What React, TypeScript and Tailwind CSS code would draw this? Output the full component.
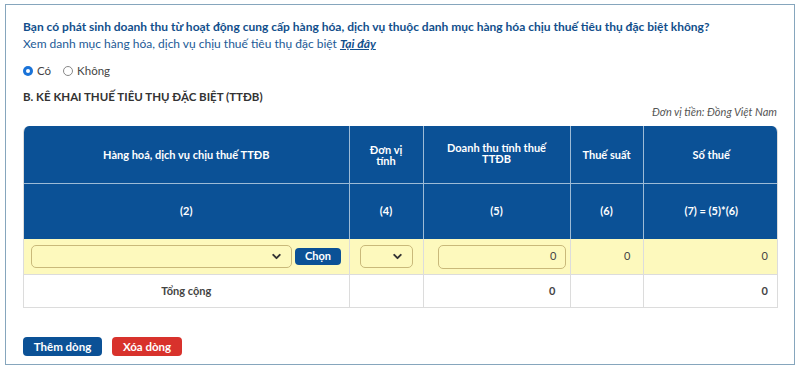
import { ChevronDown } from "lucide-react";

const FONT = { fontFamily: "Lato, 'Noto Sans', sans-serif" };

function Select({ width }: { width: string }) {
  return (
    <div
      className={`${width} h-[23px] rounded-[5px] border border-[#c9b97a] bg-[#fdf9bd] flex items-center justify-end pr-2`}
    >
      <ChevronDown size={13} strokeWidth={3.5} className="text-[#333]" />
    </div>
  );
}

export default function App() {
  return (
    <div className="w-[800px] h-[371px] bg-white pt-[4px] px-[5px]" style={FONT}>
      <div className="h-[361px] border-[1.5px] border-[#86a6bd] px-[17px] pt-[14px]">
        <p className="text-[12px] font-bold text-[#124f8c] leading-[16px] whitespace-nowrap">
          Bạn có phát sinh doanh thu từ hoạt động cung cấp hàng hóa, dịch vụ thuộc danh mục hàng hóa chịu thuế tiêu thụ đặc biệt không?
        </p>
        <p className="text-[12px] text-[#1c5a96] leading-[16px] mt-[1px]">
          Xem danh mục hàng hóa, dịch vụ chịu thuế tiêu thụ đặc biệt{" "}
          <a className="italic font-bold underline text-[#124f8c]">Tại đây</a>
        </p>

        <div className="flex items-center gap-[12px] mt-[10px] text-[11.5px] text-[#444]">
          <label className="flex items-center gap-[4px]">
            <span className="w-[10px] h-[10px] rounded-full bg-[#1a73d8] flex items-center justify-center">
              <span className="w-[4px] h-[4px] rounded-full bg-white" />
            </span>
            Có
          </label>
          <label className="flex items-center gap-[4px]">
            <span className="w-[10px] h-[10px] rounded-full border border-[#888]" />
            Không
          </label>
        </div>

        <p className="mt-[11px] text-[11.5px] font-bold text-[#333] leading-[14px]">
          B. KÊ KHAI THUẾ TIÊU THỤ ĐẶC BIỆT (TTĐB)
        </p>
        <p className="text-right text-[11px] italic text-[#555] leading-[14px] mt-[1px]">
          Đơn vị tiền: Đồng Việt Nam
        </p>

        <div className="mt-[7px] w-[755px] rounded-t-[6px] overflow-hidden border-b border-x border-[#dcdcdc]">
          <table className="w-full border-collapse table-fixed text-[11px]">
            <colgroup>
              <col className="w-[325px]" />
              <col className="w-[74px]" />
              <col className="w-[147px]" />
              <col className="w-[73px]" />
              <col className="w-[136px]" />
            </colgroup>
            <thead className="bg-[#0b5196] text-white font-bold">
              <tr className="h-[57px] border-b border-[#9dbbd6]">
                <th className="border-r border-[#9dbbd6] leading-[11px] px-1">Hàng hoá, dịch vụ chịu thuế TTĐB</th>
                <th className="border-r border-[#9dbbd6] leading-[11px] px-[18px]">Đơn vị tính</th>
                <th className="border-r border-[#9dbbd6] leading-[11px] px-4 pb-[4px]">Doanh thu tính thuế TTĐB</th>
                <th className="border-r border-[#9dbbd6] leading-[11px]">Thuế suất</th>
                <th className="leading-[11px]">Số thuế</th>
              </tr>
              <tr className="h-[56px]">
                <th className="border-r border-[#9dbbd6]">(2)</th>
                <th className="border-r border-[#9dbbd6]">(4)</th>
                <th className="border-r border-[#9dbbd6]">(5)</th>
                <th className="border-r border-[#9dbbd6]">(6)</th>
                <th>(7) = (5)*(6)</th>
              </tr>
            </thead>
            <tbody className="text-[11px] text-[#444]">
              <tr className="h-[35px] bg-[#fdf9bd] border-b border-[#dcdcdc]">
                <td className="border-r border-[#dcdcdc] pl-[7px]">
                  <div className="flex items-center gap-[3px]">
                    <Select width="w-[261px]" />
                    <button className="h-[17px] w-[46px] rounded-[4px] bg-[#0b5196] text-white text-[11px] font-bold">
                      Chọn
                    </button>
                  </div>
                </td>
                <td className="border-r border-[#dcdcdc] px-[10px]">
                  <Select width="w-[53px]" />
                </td>
                <td className="border-r border-[#dcdcdc] px-[14px]">
                  <div className="h-[24px] w-[128px] rounded-[5px] border border-[#c9b97a] flex items-center justify-end pr-[8px]">
                    0
                  </div>
                </td>
                <td className="border-r border-[#dcdcdc] text-right pr-[12px]">0</td>
                <td className="text-right pr-[11px]">0</td>
              </tr>
              <tr className="h-[33px] bg-white font-bold text-[#444]">
                <td className="border-r border-[#dcdcdc] text-center">Tổng cộng</td>
                <td className="border-r border-[#dcdcdc]" />
                <td className="border-r border-[#dcdcdc] text-right pr-[14px]">0</td>
                <td className="border-r border-[#dcdcdc]" />
                <td className="text-right pr-[11px]">0</td>
              </tr>
            </tbody>
          </table>
        </div>

        <div className="flex gap-[10px] mt-[29px]">
          <button className="h-[19px] w-[79px] rounded-[4px] bg-[#0b5196] text-white text-[11.5px] font-bold">
            Thêm dòng
          </button>
          <button className="h-[19px] w-[70px] rounded-[4px] bg-[#d8322c] text-white text-[11.5px] font-bold">
            Xóa dòng
          </button>
        </div>
      </div>
    </div>
  );
}
